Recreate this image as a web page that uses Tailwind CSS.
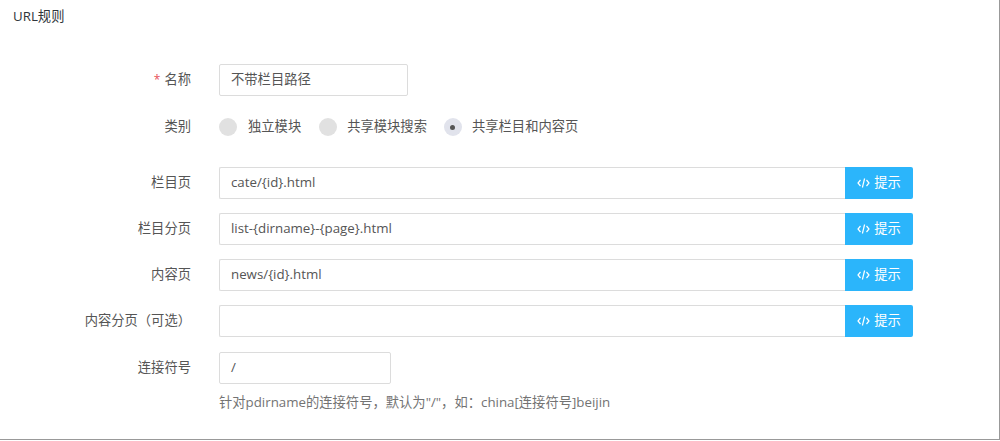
<!DOCTYPE html>
<html lang="zh">
<head>
<meta charset="utf-8">
<script src="https://cdn.jsdelivr.net/npm/@tailwindcss/browser@4"></script>
</head>
<body class="bg-white">
<div class="h-[441px] w-[1000px] overflow-hidden font-['Open_Sans','Noto_Sans_CJK_SC',sans-serif] text-[13.3px] text-[#555]">
<div class="box-border h-[440px] border-r border-b border-[#999]">
  <div class="h-[64px] pl-[13px] pt-[7px] text-[#2f353b] leading-[18px]">URL规则</div>

  <div class="flex h-[32px] items-center">
    <label class="w-[191px] text-right"><span class="text-[#e7505a] mr-[4px] text-[12px]">*</span>名称</label>
    <div class="ml-[28px] box-border flex h-[32px] w-[189px] items-center rounded-[2px] border border-[#dcdcdc] px-[11px]">不带栏目路径</div>
  </div>

  <div class="mt-[15px] flex h-[32px] items-center">
    <label class="w-[191px] text-right">类别</label>
    <div class="ml-[28px] flex items-center">
      <span class="h-[18px] w-[18px] rounded-full bg-[#e1e1e1]"></span>
      <span class="ml-[11px]">独立模块</span>
      <span class="ml-[18px] h-[18px] w-[18px] rounded-full bg-[#e1e1e1]"></span>
      <span class="ml-[10px]">共享模块搜索</span>
      <span class="ml-[17px] flex h-[18px] w-[18px] items-center justify-center rounded-full bg-[#e1e3ec]"><span class="h-[5px] w-[5px] rounded-full bg-[#555]"></span></span>
      <span class="ml-[10px]">共享栏目和内容页</span>
    </div>
  </div>

  <div class="mt-[24px] flex h-[32px] items-center">
    <label class="w-[191px] text-right">栏目页</label>
    <div class="ml-[28px] flex h-[32px] w-[694px]">
      <div class="box-border flex min-w-0 flex-1 items-center border border-r-0 border-[#dcdcdc] rounded-l-[2px] px-[11px]">cate/{id}.html</div>
      <div class="flex w-[68px] items-center justify-center gap-[4px] rounded-r-[2px] bg-[#2bb5fb] text-white">
        <svg class="h-[12px] w-[13px]" viewBox="0 0 13 12" fill="none" stroke="currentColor" stroke-width="1.2"><path d="M3.5 3 L1 6 L3.5 9"/><path d="M9.5 3 L12 6 L9.5 9"/><path d="M7.6 1.5 L5.4 10.5"/></svg>
        <span>提示</span>
      </div>
    </div>
  </div>

  <div class="mt-[14px] flex h-[32px] items-center">
    <label class="w-[191px] text-right">栏目分页</label>
    <div class="ml-[28px] flex h-[32px] w-[694px]">
      <div class="box-border flex min-w-0 flex-1 items-center border border-r-0 border-[#dcdcdc] rounded-l-[2px] px-[11px]">list-{dirname}-{page}.html</div>
      <div class="flex w-[68px] items-center justify-center gap-[4px] rounded-r-[2px] bg-[#2bb5fb] text-white">
        <svg class="h-[12px] w-[13px]" viewBox="0 0 13 12" fill="none" stroke="currentColor" stroke-width="1.2"><path d="M3.5 3 L1 6 L3.5 9"/><path d="M9.5 3 L12 6 L9.5 9"/><path d="M7.6 1.5 L5.4 10.5"/></svg>
        <span>提示</span>
      </div>
    </div>
  </div>

  <div class="mt-[14px] flex h-[32px] items-center">
    <label class="w-[191px] text-right">内容页</label>
    <div class="ml-[28px] flex h-[32px] w-[694px]">
      <div class="box-border flex min-w-0 flex-1 items-center border border-r-0 border-[#dcdcdc] rounded-l-[2px] px-[11px]">news/{id}.html</div>
      <div class="flex w-[68px] items-center justify-center gap-[4px] rounded-r-[2px] bg-[#2bb5fb] text-white">
        <svg class="h-[12px] w-[13px]" viewBox="0 0 13 12" fill="none" stroke="currentColor" stroke-width="1.2"><path d="M3.5 3 L1 6 L3.5 9"/><path d="M9.5 3 L12 6 L9.5 9"/><path d="M7.6 1.5 L5.4 10.5"/></svg>
        <span>提示</span>
      </div>
    </div>
  </div>

  <div class="mt-[14px] flex h-[32px] items-center">
    <label class="w-[191px] text-right">内容分页（可选）</label>
    <div class="ml-[28px] flex h-[32px] w-[694px]">
      <div class="box-border min-w-0 flex-1 border border-r-0 border-[#dcdcdc] rounded-l-[2px]"></div>
      <div class="flex w-[68px] items-center justify-center gap-[4px] rounded-r-[2px] bg-[#2bb5fb] text-white">
        <svg class="h-[12px] w-[13px]" viewBox="0 0 13 12" fill="none" stroke="currentColor" stroke-width="1.2"><path d="M3.5 3 L1 6 L3.5 9"/><path d="M9.5 3 L12 6 L9.5 9"/><path d="M7.6 1.5 L5.4 10.5"/></svg>
        <span>提示</span>
      </div>
    </div>
  </div>

  <div class="mt-[15px] flex h-[32px] items-center">
    <label class="w-[191px] text-right">连接符号</label>
    <div class="ml-[28px] box-border flex h-[32px] w-[172px] items-center rounded-[2px] border border-[#dcdcdc] px-[11px]">/</div>
  </div>
  <div class="ml-[219px] mt-[9px] leading-[18px] text-[#737373]">针对pdirname的连接符号，默认为"/"，如：china[连接符号]beijin</div>
</div>
</div>
</body>
</html>
